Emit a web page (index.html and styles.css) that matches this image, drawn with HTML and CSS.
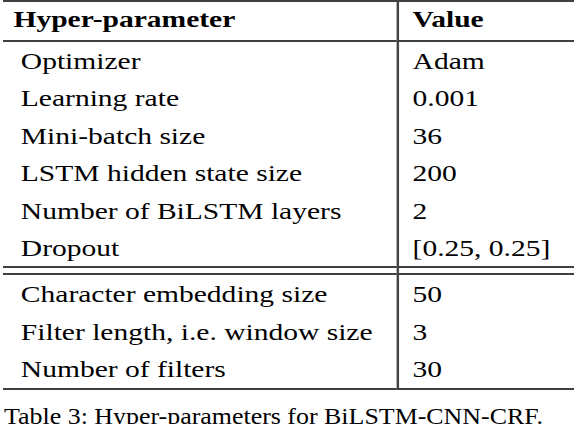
FILE: index.html
```html
<!DOCTYPE html>
<html lang="en">
<head>
    <meta charset="UTF-8">
    <meta name="viewport" content="width=device-width, initial-scale=1.0">
    <title>Table 3</title>
    <link rel="stylesheet" href="styles.css">
</head>
<body>
    <div class="figure">
        <table class="params">
            <colgroup>
                <col class="col-name">
                <col>
            </colgroup>
            <thead>
                <tr>
                    <th class="name">Hyper-parameter</th>
                    <th class="value">Value</th>
                </tr>
            </thead>
            <tbody>
                <tr><td class="name">Optimizer</td><td class="value">Adam</td></tr>
                <tr><td class="name">Learning rate</td><td class="value">0.001</td></tr>
                <tr><td class="name">Mini-batch size</td><td class="value">36</td></tr>
                <tr><td class="name">LSTM hidden state size</td><td class="value">200</td></tr>
                <tr><td class="name">Number of BiLSTM layers</td><td class="value">2</td></tr>
                <tr class="group-end"><td class="name">Dropout</td><td class="value">[0.25, 0.25]</td></tr>
                <!-- double rule between the two groups -->
                <tr class="gap"><td></td><td class="value"></td></tr>
                <tr><td class="name">Character embedding size</td><td class="value">50</td></tr>
                <tr><td class="name">Filter length, i.e. window size</td><td class="value">3</td></tr>
                <tr class="group-end"><td class="name">Number of filters</td><td class="value">30</td></tr>
            </tbody>
        </table>
        <p class="caption">Table 3: Hyper-parameters for BiLSTM-CNN-CRF.</p>
    </div>
</body>
</html>
```

FILE: styles.css
```css
html, body {
    margin: 0;
    overflow: hidden;
    background-color: #fff;
}
body {
    font-family: "Liberation Serif", "Times New Roman", serif;
    color: #000;
}
.figure {
    padding-left: 3px;
}

/* the scan is wider than tall, so stretch the table sideways */
.params {
    width: 465px;
    table-layout: fixed;
    border-collapse: separate;
    border-spacing: 0;
    border-top: 2px solid #3f3f3f;
    font-size: 24px;
    transform: scaleX(1.23);
    transform-origin: 0 0;
}
.col-name {
    width: 320px;
}
.params th,
.params td {
    text-align: left;
    white-space: nowrap;
    padding-right: 0;
}
.params th {
    font-weight: bold;
    line-height: 34px;
    padding-top: 0;
    padding-bottom: 4px;
    border-bottom: 2px solid #3f3f3f;
}
.params td {
    line-height: 36.4px;
    padding-top: 1px;
    padding-bottom: 0;
}
.params th.name {
    padding-left: 8.5px;
}
.params td.name {
    padding-left: 14.5px;
}
.params .value {
    border-left: 2px solid #454545;
    padding-left: 11px;
}
.params .group-end td {
    border-bottom: 2px solid #3f3f3f;
}
.params .gap td {
    height: 5px;
    line-height: 0;
    padding-top: 0;
    border-bottom: 2px solid #3f3f3f;
}

.caption {
    margin: 12px 0 0 0.5px;
    font-size: 24px;
    line-height: 28px;
    white-space: nowrap;
    transform: scaleX(1.08);
    transform-origin: 0 0;
}
```
